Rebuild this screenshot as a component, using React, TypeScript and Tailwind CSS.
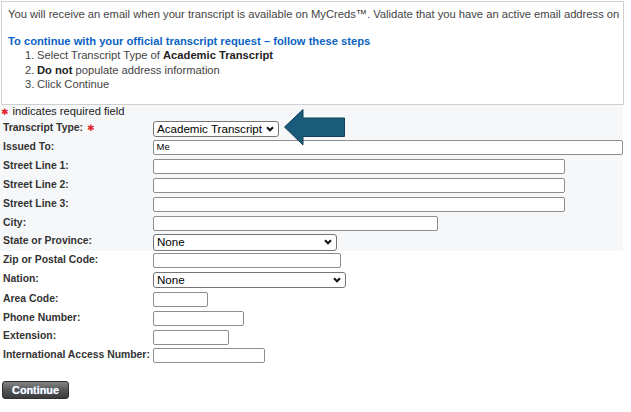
import React from "react";

const Chevron = () => (
  <svg width="8" height="6" viewBox="0 0 8 6" className="block">
    <path d="M1 1.2 L4 4.3 L7 1.2" fill="none" stroke="#111" strokeWidth="2" />
  </svg>
);

const Star = ({ className = "" }: { className?: string }) => (
  <span className={`text-[#e3262b] text-[9px] leading-none font-['DejaVu_Sans',sans-serif] ${className}`}>✱</span>
);

function Label({ text, required }: { text: string; required?: boolean }) {
  return (
    <div className="w-[153px] pl-[3px] text-[10.4px] font-bold text-[#333] leading-none whitespace-nowrap -mt-[1px] flex items-center">
      <span>{text}</span>
      {required && <Star className="ml-[4px]" />}
    </div>
  );
}

function TextRow({ label, w, h = 19, value }: { label: string; w: number; h?: number; value?: string }) {
  return (
    <div className="flex items-center" style={{ height: h }}>
      <Label text={label} />
      <div
        className="h-[15px] border border-[#8d8d8d] rounded-[2px] bg-white flex items-center pl-[3px] text-[9.5px] text-black"
        style={{ width: w }}
      >
        {value}
      </div>
    </div>
  );
}

function SelectRow({
  label,
  w,
  h = 19,
  sh = 16,
  value,
  required,
}: {
  label: string;
  w: number;
  h?: number;
  sh?: number;
  value: string;
  required?: boolean;
}) {
  return (
    <div className="flex items-center" style={{ height: h }}>
      <Label text={label} required={required} />
      <div
        className="border border-[#767676] rounded-[3px] bg-white flex items-center justify-between pl-[3px] pr-[4px] text-black text-[11.6px]"
        style={{ width: w, height: sh }}
      >
        <span className="leading-none">{value}</span>
        <Chevron />
      </div>
    </div>
  );
}

export default function App() {
  return (
    <div className="relative w-[631px] h-[412px] bg-white overflow-hidden font-['Liberation_Sans',Arial,sans-serif]">
      {/* Info box */}
      <div className="mt-[1px] ml-[1px] w-[623px] h-[104px] border border-[#d0d0d0] overflow-hidden px-[6px] pt-[5px] text-[#444] text-[11.2px]">
        <div className="h-[14px] leading-[14px] whitespace-nowrap">
          You will receive an email when your transcript is available on MyCreds™. Validate that you have an active email address on
        </div>
        <div className="mt-[14px] h-[13px] leading-[13px] font-bold text-[#0b63c4] text-[11.2px] whitespace-nowrap">
          To continue with your official transcript request – follow these steps
        </div>
        <div className="pl-[17px] leading-[14.5px]">
          <div className="h-[14.5px] whitespace-nowrap">
            <span className="inline-block w-[12px]">1.</span>Select Transcript Type of <b className="text-[#222]">Academic Transcript</b>
          </div>
          <div className="h-[14.5px] whitespace-nowrap">
            <span className="inline-block w-[12px]">2.</span>
            <b className="text-[#222]">Do not</b> populate address information
          </div>
          <div className="h-[14.5px] whitespace-nowrap">
            <span className="inline-block w-[12px]">3.</span>Click Continue
          </div>
        </div>
      </div>

      {/* Form area with light background */}
      <div className="w-[623px] bg-[#f6f7f9]">
        <div className="h-[14px] flex items-center text-[11.2px] text-[#222] pl-[1px]">
          <Star className="mr-[4px]" />
          <span className="leading-none">indicates required field</span>
        </div>
        <SelectRow label="Transcript Type:" w={126} value="Academic Transcript" required />
        <TextRow label="Issued To:" w={472} value="Me" />
        <TextRow label="Street Line 1:" w={412} />
        <TextRow label="Street Line 2:" w={412} />
        <TextRow label="Street Line 3:" w={412} />
        <TextRow label="City:" w={285} />
        <SelectRow label="State or Province:" w={184} h={18} sh={17} value="None" />
      </div>
      <TextRow label="Zip or Postal Code:" w={188} />
      <SelectRow label="Nation:" w={193} h={20} value="None" />
      <TextRow label="Area Code:" w={55} />
      <TextRow label="Phone Number:" w={91} />
      <TextRow label="Extension:" w={76} h={18} />
      <TextRow label="International Access Number:" w={112} />

      <div className="mt-[16px] ml-[2px]">
        <button className="w-[67px] h-[18px] rounded-[3px] border border-[#2e2e2e] bg-gradient-to-b from-[#858585] via-[#555] to-[#3a3a3a] text-white font-bold text-[10.8px] leading-none flex items-center justify-center [text-shadow:0_0_1px_#9cc8ff]">
          Continue
        </button>
      </div>

      {/* Arrow annotation */}
      <svg className="absolute left-[283px] top-[108px]" width="64" height="40" viewBox="283 108 64 40">
        <polygon
          points="284.5,127 303,109.5 303,118 344.5,118 344.5,136.5 303,136.5 303,145"
          fill="#1a5a7b"
          stroke="#103e57"
          strokeWidth="1"
        />
      </svg>
    </div>
  );
}
